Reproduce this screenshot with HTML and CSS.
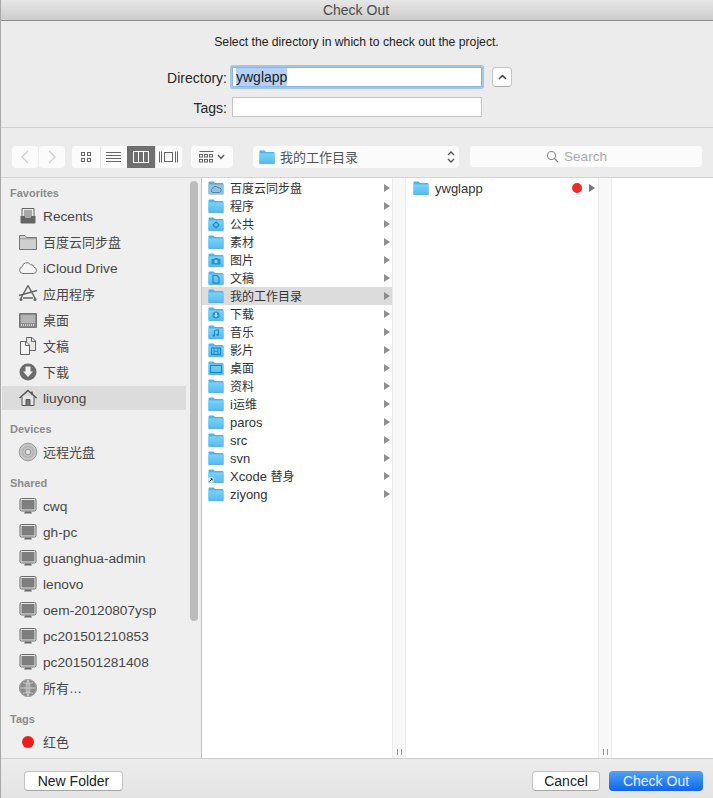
FILE: index.html
```html
<!DOCTYPE html>
<html lang="en">
<head>
<meta charset="utf-8">
<title>Check Out</title>
<link rel="stylesheet" href="styles.css">
</head>
<body>
<svg class="defs" aria-hidden="true">
  <defs>
    <linearGradient id="fg" x1="0" y1="0" x2="0" y2="1"><stop offset="0" stop-color="#7ad2f8"/><stop offset="1" stop-color="#57bcf0"/></linearGradient>
    <symbol id="folder" viewBox="0 0 16 14"><path d="M0.5 1.5Q0.5 .5 1.5 .5H5.5L7 2H14.5Q15.5 2 15.5 3V13.5H.5Z" fill="#4fb4e8"/><path d="M.5 3.4H15.5V13H.5Z" fill="url(#fg)"/><path d="M.5 13.2H15.5V13.9H.5Z" fill="#3ea3da"/></symbol>
    <symbol id="f-cloud" viewBox="0 0 16 14"><path d="M0.5 1.5Q0.5 .5 1.5 .5H5.5L7 2H14.5Q15.5 2 15.5 3V13.5H.5Z" fill="#6aa6c6"/><path d="M.5 3.4H15.5V13H.5Z" fill="#8cc4e0"/><path d="M5 11.5A2 2 0 0 1 4.6 7.6A3 3 0 0 1 10 6.8A2 2 0 0 1 11.5 11.5Z" fill="none" stroke="#4d7f9c" stroke-width=".9"/></symbol>
    <symbol id="f-public" viewBox="0 0 16 14"><use href="#folder" width="16" height="14"/><path d="M8 5L11 8L8 11L5 8Z" fill="none" stroke="#1587c9" stroke-width="1.1"/></symbol>
    <symbol id="f-photo" viewBox="0 0 16 14"><use href="#folder" width="16" height="14"/><path d="M3.5 6H6L7 5H9.500L10.500 6H12.500V11.500H3.500Z" fill="#1f95d6"/><circle cx="8" cy="8.500" r="1.700" fill="#8ad6fa"/></symbol>
    <symbol id="f-doc" viewBox="0 0 16 14"><use href="#folder" width="16" height="14"/><path d="M5 4.500H9L11 6.500V12H5Z" fill="none" stroke="#1587c9" stroke-width="1.100"/></symbol>
    <symbol id="f-down" viewBox="0 0 16 14"><use href="#folder" width="16" height="14"/><circle cx="8" cy="8" r="3.600" fill="#1f95d6"/><path d="M7 5.800H9V8H10.300L8 10.500L5.700 8H7Z" fill="#a5e0fb"/></symbol>
    <symbol id="f-music" viewBox="0 0 16 14"><use href="#folder" width="16" height="14"/><path d="M6.500 10.500V5.500L10.500 4.700V9.800" fill="none" stroke="#1587c9" stroke-width="1"/><circle cx="5.600" cy="10.600" r="1.100" fill="#1587c9"/><circle cx="9.600" cy="9.900" r="1.100" fill="#1587c9"/></symbol>
    <symbol id="f-movie" viewBox="0 0 16 14"><use href="#folder" width="16" height="14"/><rect x="3.500" y="5" width="9" height="6.500" fill="none" stroke="#1587c9" stroke-width="1.100"/><path d="M6 5V11.500M10 5V11.500M6 8.200H10" stroke="#1587c9" stroke-width=".9"/></symbol>
    <symbol id="f-desk" viewBox="0 0 16 14"><use href="#folder" width="16" height="14"/><rect x="2.500" y="4.500" width="11" height="7" fill="none" stroke="#1587c9" stroke-width="1.100"/></symbol>
    <symbol id="f-alias" viewBox="0 0 16 14"><use href="#folder" width="16" height="14"/><rect x=".5" y="8.500" width="5" height="5" fill="#f4f4f4"/><path d="M1.500 12.500L4 10M2.500 9.800H4.200V11.500" fill="none" stroke="#111" stroke-width=".9"/></symbol>
    <symbol id="i-recents" viewBox="0 0 20 20"><path d="M4 2.500H16V11H4Z" fill="#e9e9e9" stroke="#666"/><path d="M6 5H14M6 7H14M6 9H14" stroke="#666"/><path d="M2.500 10H6.500L7.500 12H12.500L13.500 10H17.500V16.500Q17.500 17.500 16.500 17.500H3.500Q2.500 17.500 2.500 16.500Z" fill="#666"/></symbol>
    <symbol id="i-folder" viewBox="0 0 20 20"><path d="M1.500 3.500H7L8.500 5.500H18.500V17.500H1.500Z" fill="#cfcfcf" stroke="#777"/><path d="M1.500 6.800H18.500" stroke="#999"/></symbol>
    <symbol id="i-cloud" viewBox="0 0 20 20"><path d="M5 15.500A3.500 3.500 0 0 1 4.300 8.600A4.500 4.500 0 0 1 12.500 6.700A3 3 0 0 1 16 9.200A3.200 3.200 0 0 1 15.500 15.500Z" fill="#f4f4f4" stroke="#777"/></symbol>
    <symbol id="i-apps" viewBox="0 0 20 20"><path d="M10 1.500L2.500 15M10 1.500L17.500 15M1 11.500L19 6.500M5 14H15" fill="none" stroke="#666" stroke-width="1.500"/><circle cx="3" cy="15.500" r="1.500" fill="#666"/><circle cx="17" cy="15.500" r="1.500" fill="#666"/></symbol>
    <symbol id="i-desk" viewBox="0 0 20 20"><path d="M1.500 3.500H18.500V17.500H1.500Z" fill="#8a8a8a" stroke="#777"/><path d="M3 5H17V13H3Z" fill="#b4b4b4"/><path d="M3 15H17" stroke="#e4e4e4" stroke-dasharray="1 1" stroke-width="1.500"/></symbol>
    <symbol id="i-docs" viewBox="0 0 20 20"><path d="M8.500 1.500H14L17.500 5V14.500H8.500Z" fill="#e8e8e8" stroke="#666"/><path d="M13.500 1.500V5.500H17.500" fill="none" stroke="#666"/><path d="M2.500 5.500H8L11.500 9V18.500H2.500Z" fill="#f5f5f5" stroke="#666"/><path d="M7.500 5.500V9.500H11.500" fill="none" stroke="#666"/></symbol>
    <symbol id="i-down" viewBox="0 0 20 20"><circle cx="10" cy="10" r="8.500" fill="#6b6b6b"/><path d="M7.500 4.500H12.500V9.500H15L10 15L5 9.500H7.500Z" fill="#f2f2f2"/></symbol>
    <symbol id="i-home" viewBox="0 0 20 20"><path d="M1.500 10L10 2.500L18.500 10" fill="none" stroke="#555" stroke-width="1.600"/><path d="M4 8.500V17.500H16V8.500" fill="#e8e8e8" stroke="#555"/><path d="M8 17.500V11.500H12V17.500" fill="#777" stroke="#555"/><path d="M14 3.500V6.500" stroke="#555" stroke-width="1.600"/></symbol>
    <symbol id="i-disc" viewBox="0 0 20 20"><circle cx="10" cy="10" r="8.800" fill="#c6c6c6" stroke="#999"/><circle cx="10" cy="10" r="5.400" fill="none" stroke="#aaa"/><circle cx="10" cy="10" r="2.800" fill="#e4e4e4" stroke="#8f8f8f"/></symbol>
    <symbol id="i-mon" viewBox="0 0 20 20"><rect x="2" y="2.500" width="16" height="12.500" rx="1.500" fill="#e8e8e8" stroke="#6b6b6b"/><rect x="3.500" y="4" width="13" height="9.500" fill="#7e7e7e"/><path d="M6 17.500H14L13 15.500H7Z" fill="#6b6b6b"/></symbol>
    <symbol id="i-globe" viewBox="0 0 20 20"><circle cx="10" cy="10" r="8.600" fill="#8d8d8d" stroke="#9b9b9b"/><path d="M10 1.500V18.500M2 10H18M5 4.500Q10 7.500 15 4.500M5 15.500Q10 12.500 15 15.500" fill="none" stroke="#d6d6d6" stroke-width=".8"/><path d="M10 2Q6 10 10 18Q14 10 10 2" fill="none" stroke="#d6d6d6" stroke-width=".8"/></symbol>
  </defs>
</svg>

<div class="window">
  <header class="titlebar">Check Out</header>

  <section class="prompt">
    <p class="prompt-text">Select the directory in which to check out the project.</p>
    <div class="form-row">
      <label class="form-label">Directory:</label>
      <div class="field field-focus"><span class="sel">ywglapp</span></div>
      <button class="stepper" aria-label="Collapse"><svg width="9" height="6" viewBox="0 0 9 6"><path d="M1 5L4.500 1.500L8 5" fill="none" stroke="#444" stroke-width="1.500"/></svg></button>
    </div>
    <div class="form-row form-row-tags">
      <label class="form-label">Tags:</label>
      <div class="field"></div>
    </div>
  </section>

  <nav class="toolbar">
    <div class="tool-group nav-group">
      <button class="tool tool-nav"><svg width="10" height="14" viewBox="0 0 10 14"><path d="M8 1L2 7L8 13" fill="none" stroke="#d0d0d0" stroke-width="1.400"/></svg></button>
      <button class="tool tool-nav"><svg width="10" height="14" viewBox="0 0 10 14"><path d="M2 1L8 7L2 13" fill="none" stroke="#d0d0d0" stroke-width="1.400"/></svg></button>
    </div>
    <div class="tool-group view-group">
      <button class="tool tool-view"><svg width="12" height="12" viewBox="0 0 12 12" fill="none" stroke="#666"><rect x="1.500" y="1.500" width="3" height="3"/><rect x="7.500" y="1.500" width="3" height="3"/><rect x="1.500" y="7.500" width="3" height="3"/><rect x="7.500" y="7.500" width="3" height="3"/></svg></button>
      <button class="tool tool-view"><svg width="15" height="12" viewBox="0 0 15 12" stroke="#666"><path d="M0 1.500H15M0 4.500H15M0 7.500H15M0 10.500H15"/></svg></button>
      <button class="tool tool-view tool-on"><svg width="16" height="12" viewBox="0 0 16 12" fill="none" stroke="#fff"><rect x=".5" y=".5" width="15" height="11"/><path d="M5.500 .5V11.500M10.500 .5V11.500"/></svg></button>
      <button class="tool tool-view"><svg width="19" height="12" viewBox="0 0 19 12" fill="none" stroke="#666"><rect x="5.500" y="1.500" width="8" height="9"/><path d="M.5 .5V11.500M2.500 .5V11.500M16.500 .5V11.500M18.500 .5V11.500"/></svg></button>
    </div>
    <button class="tool-group group-by"><svg width="15" height="12" viewBox="0 0 15 12" fill="none" stroke="#666"><path d="M.5 .5H14.500"/><rect x=".5" y="3.500" width="3" height="2.500"/><rect x="5.500" y="3.500" width="3" height="2.500"/><rect x="10.500" y="3.500" width="3" height="2.500"/><rect x=".5" y="8.500" width="3" height="2.500"/><rect x="5.500" y="8.500" width="3" height="2.500"/><rect x="10.500" y="8.500" width="3" height="2.500"/></svg><svg width="8" height="6" viewBox="0 0 8 6"><path d="M1 1L4 4.500L7 1" fill="none" stroke="#555" stroke-width="1.400"/></svg></button>
    <div class="tool-group path-popup">
      <svg class="ico-folder" width="16" height="14"><use href="#folder"/></svg>
      <span class="path-name">我的工作目录</span>
      <svg class="updown" width="8" height="14" viewBox="0 0 8 14"><path d="M1 5L4 2L7 5M1 9L4 12L7 9" fill="none" stroke="#555" stroke-width="1.300"/></svg>
    </div>
    <div class="tool-group search">
      <svg width="13" height="13" viewBox="0 0 13 13"><circle cx="5.500" cy="5.500" r="4" fill="none" stroke="#888" stroke-width="1.100"/><path d="M8.500 8.500L12 12" stroke="#888" stroke-width="1.300"/></svg>
      <span>Search</span>
    </div>
  </nav>

  <main class="browser">
    <aside class="sidebar">
      <h3 class="side-head side-head-first">Favorites</h3>
      <div class="side-item"><svg class="side-ico"><use href="#i-recents"/></svg>Recents</div>
      <div class="side-item side-zh"><svg class="side-ico"><use href="#i-folder"/></svg>百度云同步盘</div>
      <div class="side-item"><svg class="side-ico"><use href="#i-cloud"/></svg>iCloud Drive</div>
      <div class="side-item side-zh"><svg class="side-ico"><use href="#i-apps"/></svg>应用程序</div>
      <div class="side-item side-zh"><svg class="side-ico"><use href="#i-desk"/></svg>桌面</div>
      <div class="side-item side-zh"><svg class="side-ico"><use href="#i-docs"/></svg>文稿</div>
      <div class="side-item side-zh"><svg class="side-ico"><use href="#i-down"/></svg>下载</div>
      <div class="side-item side-on"><svg class="side-ico"><use href="#i-home"/></svg>liuyong</div>
      <h3 class="side-head">Devices</h3>
      <div class="side-item side-zh"><svg class="side-ico"><use href="#i-disc"/></svg>远程光盘</div>
      <h3 class="side-head">Shared</h3>
      <div class="side-item"><svg class="side-ico"><use href="#i-mon"/></svg>cwq</div>
      <div class="side-item"><svg class="side-ico"><use href="#i-mon"/></svg>gh-pc</div>
      <div class="side-item"><svg class="side-ico"><use href="#i-mon"/></svg>guanghua-admin</div>
      <div class="side-item"><svg class="side-ico"><use href="#i-mon"/></svg>lenovo</div>
      <div class="side-item"><svg class="side-ico"><use href="#i-mon"/></svg>oem-20120807ysp</div>
      <div class="side-item"><svg class="side-ico"><use href="#i-mon"/></svg>pc201501210853</div>
      <div class="side-item"><svg class="side-ico"><use href="#i-mon"/></svg>pc201501281408</div>
      <div class="side-item side-zh"><svg class="side-ico"><use href="#i-globe"/></svg>所有…</div>
      <h3 class="side-head">Tags</h3>
      <div class="side-item side-zh"><span class="side-dot"></span>红色</div>
      <div class="side-scroll"></div>
    </aside>

    <section class="column col-1">
      <div class="row row-zh"><svg class="fi"><use href="#f-cloud"/></svg><span class="zh">百度云同步盘</span><i class="arrow"></i></div>
      <div class="row row-zh"><svg class="fi"><use href="#folder"/></svg><span class="zh">程序</span><i class="arrow"></i></div>
      <div class="row row-zh"><svg class="fi"><use href="#f-public"/></svg><span class="zh">公共</span><i class="arrow"></i></div>
      <div class="row row-zh"><svg class="fi"><use href="#folder"/></svg><span class="zh">素材</span><i class="arrow"></i></div>
      <div class="row row-zh"><svg class="fi"><use href="#f-photo"/></svg><span class="zh">图片</span><i class="arrow"></i></div>
      <div class="row row-zh"><svg class="fi"><use href="#f-doc"/></svg><span class="zh">文稿</span><i class="arrow"></i></div>
      <div class="row row-zh row-on"><svg class="fi"><use href="#folder"/></svg><span class="zh">我的工作目录</span><i class="arrow"></i></div>
      <div class="row row-zh"><svg class="fi"><use href="#f-down"/></svg><span class="zh">下载</span><i class="arrow"></i></div>
      <div class="row row-zh"><svg class="fi"><use href="#f-music"/></svg><span class="zh">音乐</span><i class="arrow"></i></div>
      <div class="row row-zh"><svg class="fi"><use href="#f-movie"/></svg><span class="zh">影片</span><i class="arrow"></i></div>
      <div class="row row-zh"><svg class="fi"><use href="#f-desk"/></svg><span class="zh">桌面</span><i class="arrow"></i></div>
      <div class="row row-zh"><svg class="fi"><use href="#folder"/></svg><span class="zh">资料</span><i class="arrow"></i></div>
      <div class="row row-zh"><svg class="fi"><use href="#folder"/></svg><span>i<span class="zh">运维</span></span><i class="arrow"></i></div>
      <div class="row"><svg class="fi"><use href="#folder"/></svg><span>paros</span><i class="arrow"></i></div>
      <div class="row"><svg class="fi"><use href="#folder"/></svg><span>src</span><i class="arrow"></i></div>
      <div class="row"><svg class="fi"><use href="#folder"/></svg><span>svn</span><i class="arrow"></i></div>
      <div class="row row-zh"><svg class="fi"><use href="#f-alias"/></svg><span>Xcode <span class="zh">替身</span></span><i class="arrow"></i></div>
      <div class="row"><svg class="fi"><use href="#folder"/></svg><span>ziyong</span><i class="arrow"></i></div>
    </section>
    <div class="handle"><span class="grip"></span></div>

    <section class="column col-2">
      <div class="row"><svg class="fi"><use href="#folder"/></svg><span class="row-name">ywglapp</span><span class="row-dot"></span><i class="arrow arrow-dark"></i></div>
    </section>
    <div class="handle"><span class="grip"></span></div>

    <section class="column col-3"></section>
  </main>

  <footer class="bottom">
    <button class="btn btn-new">New Folder</button>
    <span class="spacer"></span>
    <button class="btn btn-cancel">Cancel</button>
    <button class="btn btn-primary">Check Out</button>
  </footer>
</div>
</body>
</html>
```

FILE: styles.css
```css
* { box-sizing: border-box; }
html, body { margin: 0; padding: 0; }
body {
  font-family: "Liberation Sans", "Noto Sans CJK SC", sans-serif;
  font-size: 13px;
  color: #2e2e2e;
  background: #ececec;
  overflow: hidden;
}
button { font-family: inherit; margin: 0; padding: 0; }
.defs { position: absolute; width: 0; height: 0; }

.window {
  width: 713px;
  height: 798px;
  display: flex;
  flex-direction: column;
  border-left: 1px solid #a8a8a8;
  overflow: hidden;
}

.titlebar {
  height: 21px;
  flex: none;
  line-height: 20px;
  text-align: center;
  color: #4c4c4c;
  font-size: 14px;
  padding-right: 2px;
  background: linear-gradient(#e6e6e6, #cdcdcd);
  border-bottom: 1px solid #8e8e8e;
}

.prompt {
  height: 107px;
  flex: none;
  background: #ececec;
  border-bottom: 1px solid #d2d2d2;
}
.prompt-text {
  margin: 0;
  padding-top: 14px;
  height: 46px;
  text-align: center;
  font-size: 12.2px;
  line-height: 14px;
  color: #222;
  padding-right: 1px;
}
.form-row { display: flex; align-items: center; height: 20px; }
.form-row-tags { margin-top: 10px; }
.form-label { width: 231px; text-align: right; padding: 2px 5px 0 0; font-size: 14px; color: #262626; }
.field {
  width: 250px;
  height: 20px;
  background: #fff;
  border: 1px solid #c4c4c4;
  line-height: 19px;
  padding-left: 3px;
  font-size: 14px;
  color: #222;
}
.field-focus { border-color: #8ab6ea; box-shadow: 0 0 0 2px #a3c4ec; border-radius: 1px; }
.sel { background: #b3d1f5; display: inline-block; height: 18px; }
.stepper {
  width: 20px;
  height: 20px;
  margin-left: 10px;
  background: #fff;
  border: 1px solid #c6c6c6;
  border-bottom-color: #aaa;
  border-radius: 4px;
  display: flex;
  align-items: center;
  justify-content: center;
}

.toolbar {
  height: 50px;
  flex: none;
  display: flex;
  align-items: center;
  padding: 8px 0 0 11px;
  background: #ececec;
  border-bottom: 1px solid #d4d4d4;
}
.tool-group { height: 22px; display: flex; background: #fbfbfb; border-radius: 4px; border: 0; }
.tool { border: 0; background: #fbfbfb; height: 22px; display: flex; align-items: center; justify-content: center; }
.nav-group { background: transparent; width: 53px; gap: 1px; }
.tool-nav { width: 26px; border-radius: 4px; }
.view-group { margin-left: 7px; width: 110px; overflow: hidden; }
.tool-view { width: 27.5px; border-left: 1px solid #e4e4e4; }
.tool-view:first-child { border-left: 0; }
.tool-on { background: #6f6f6f; border-left: 0; }
.group-by { margin-left: 9px; width: 42px; align-items: center; justify-content: center; gap: 3px; }
.path-popup { margin-left: 20px; width: 206px; align-items: center; padding: 0 4px 0 6px; }
.path-name { margin-left: 5px; flex: 1; font-size: 13px; color: #555; }
.search { margin-left: 11px; width: 232px; height: 21px; align-items: center; justify-content: center; gap: 5px; color: #aaa; font-size: 13.5px; padding-right: 19px; }

.browser { flex: 1; min-height: 0; display: flex; background: #fff; }

.sidebar {
  position: relative;
  width: 201px;
  flex: none;
  background: #efefef;
  border-right: 1px solid #c4c4c4;
  padding-top: 8px;
  overflow: hidden;
}
.side-head {
  margin: 11px 0 0;
  height: 14px;
  line-height: 14px;
  padding-left: 9px;
  font-size: 11px;
  font-weight: bold;
  color: #8b8b8b;
}
.side-head-first { margin-top: 0; }
.sidebar .side-head + .side-item { margin-top: 3px; }
.side-item {
  height: 26px;
  display: flex;
  align-items: center;
  padding-left: 17px;
  margin-right: 15px;
  font-size: 13.7px;
  color: #474747;
}
.side-zh { font-size: 13px; padding-bottom: 2px; }
.side-zh .side-ico, .side-zh .side-dot { margin-bottom: -2px; }
.side-on {
  background: #dcdcdc;
  background-clip: padding-box;
  border-top: 1px solid transparent;
  border-bottom: 1px solid transparent;
  margin-left: 1px;
  padding-left: 16px;
}
.side-ico { width: 20px; height: 20px; margin-right: 5px; flex: none; }
.side-dot { width: 12px; height: 12px; margin: 0 9px 0 4px; border-radius: 50%; background: #ec1c1c; flex: none; }
.side-scroll { position: absolute; left: 189px; top: 3px; width: 8px; height: 440px; border-radius: 4px; background: #bcbcbc; }

.column { display: flex; flex-direction: column; padding-top: 1px; background: #fff; }
.col-1 { width: 190px; flex: none; }
.col-2 { width: 192px; flex: none; }
.col-3 { flex: 1; }
.row {
  height: 18px;
  flex: none;
  display: flex;
  align-items: center;
  padding: 0 2px 0 6px;
  font-size: 13px;
  color: #333;
}
.row-zh { padding-bottom: 2px; }
.row-zh .fi, .row-zh .arrow { margin-bottom: -2px; }
.fi + span { margin-left: 6px; }
.row-on { background: #dcdcdc; }
.col-2 .row { padding: 0 3px 0 7px; }
.zh { font-size: 12px; }
.fi { width: 16px; height: 14px; flex: none; display: block; }
.arrow {
  margin-left: auto;
  width: 0;
  height: 0;
  border-left: 6px solid #8f8f8f;
  border-top: 4px solid transparent;
  border-bottom: 4px solid transparent;
  flex: none;
}
.arrow-dark { margin-left: 7px; border-left-color: #777; }
.row-dot { margin-left: auto; width: 10px; height: 10px; border-radius: 50%; background: #f02828; flex: none; }

.handle {
  width: 14px;
  flex: none;
  background: #f8f8f8;
  border-left: 1px solid #ececec;
  border-right: 1px solid #ececec;
  display: flex;
  align-items: flex-end;
  justify-content: center;
  padding-bottom: 3px;
}
.grip { width: 5px; height: 6px; border-left: 1px solid #999; border-right: 1px solid #999; }

.bottom {
  height: 40px;
  flex: none;
  display: flex;
  align-items: center;
  padding: 5px 10px 0 23px;
  background: linear-gradient(#ececec, #e4e4e4);
  border-top: 1px solid #cfcfcf;
}
.spacer { flex: 1; }
.btn {
  height: 20px;
  font-size: 14px;
  border-radius: 4px;
  background: #fff;
  color: #222;
  border: 1px solid #c4c4c4;
  border-bottom-color: #a6a6a6;
}
.btn-new { width: 99px; }
.btn-cancel { width: 68px; margin-right: 9px; }
.btn-primary { width: 94px; border: 0; color: #e8f2ff; background: linear-gradient(#4da2fb, #1066e6); }
```
